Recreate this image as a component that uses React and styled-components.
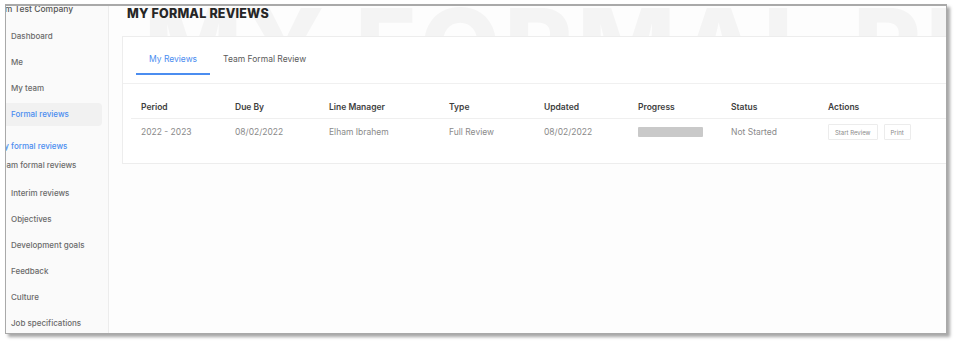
import styled, { createGlobalStyle } from "styled-components";

const Global = createGlobalStyle`
    html, body {
        margin: 0;
        padding: 0;
        background: #ffffff;
        font-family: "Inter", "Open Sans", sans-serif;
    }
`;

const Page = styled.div`
    width: 961px;
    height: 348px;
    padding: 4px 0 0 5px;
    box-sizing: border-box;
`;

const Frame = styled.div`
    width: 942px;
    height: 330px;
    box-sizing: border-box;
    border: 1px solid #a9a9a9;
    border-top-width: 2px;
    box-shadow: 3px 3px 3px rgba(0, 0, 0, 0.35);
    overflow: hidden;
    display: flex;
    background: #fdfdfd;
`;

const Sidebar = styled.aside`
    width: 102px;
    flex-shrink: 0;
    background: #fafafa;
    border-right: 1px solid #ececec;
    display: flex;
    flex-direction: column;
`;

const Company = styled.div`
    margin: -10px 0 0 -16px;
    height: 26px;
    line-height: 26px;
    font-size: 8.5px;
    font-weight: 500;
    color: #555;
    white-space: nowrap;
`;

const NavItem = styled.div`
    height: 23px;
    line-height: 23px;
    margin: 3px 6px 0 0;
    padding-left: ${(p) => (p.$sub ? "0" : "5px")};
    margin-left: ${(p) => (p.$sub ? "-9px" : "0")};
    border-radius: 0 4px 4px 0;
    font-size: 8px;
    font-weight: 500;
    white-space: nowrap;
    color: ${(p) => (p.$blue ? "#4b8df0" : "#6a6a6a")};
    background: ${(p) => (p.$active ? "#f1f1f1" : "transparent")};
`;

const SubGroup = styled.div`
    display: flex;
    flex-direction: column;
    margin: 11px 0 4px;
    & > div {
        height: 19px;
        line-height: 19px;
        margin-top: 0;
    }
`;

const Main = styled.main`
    flex: 1;
    position: relative;
    padding: 0 0 0 13px;
    overflow: hidden;
`;

const Watermark = styled.div`
    position: absolute;
    left: 35px;
    top: -12px;
    font-size: 104px;
    font-weight: 800;
    letter-spacing: 4px;
    color: #f4f4f4;
    white-space: nowrap;
    line-height: 1;
    pointer-events: none;
`;

const Title = styled.h1`
    position: relative;
    margin: 0 0 0 5px;
    height: 30px;
    line-height: 16px;
    font-size: 12.5px;
    font-weight: 800;
    color: #262626;
    letter-spacing: 0.2px;
`;

const Card = styled.section`
    position: relative;
    background: #ffffff;
    border: 1px solid #ededed;
    border-right: none;
    height: 128px;
    box-sizing: border-box;
`;

const Tabs = styled.div`
    display: flex;
    height: 46px;
    padding-left: 13px;
    border-bottom: 1px solid #f0f0f0;
`;

const Tab = styled.div`
    display: flex;
    align-items: center;
    height: 38px;
    padding: 8px 13px 0;
    box-sizing: border-box;
    font-size: 8.5px;
    color: ${(p) => (p.$active ? "#4b8df0" : "#5a5a5a")};
    border-bottom: 2px solid ${(p) => (p.$active ? "#4b8df0" : "transparent")};
`;

const Table = styled.div`
    margin: 12px 0 0 8px;
`;

const Row = styled.div`
    display: grid;
    grid-template-columns: 94px 94px 120px 95px 94px 93px 97px 1fr;
    align-items: center;
    height: ${(p) => (p.$head ? "22px" : "26px")};
    border-bottom: ${(p) => (p.$head ? "1px solid #efefef" : "none")};
`;

const Cell = styled.div`
    padding-left: 10px;
    font-size: 8.5px;
    font-weight: ${(p) => (p.$head ? 600 : 400)};
    color: ${(p) => (p.$head ? "#3e3e3e" : "#8a8a8a")};
    white-space: nowrap;
    display: flex;
    align-items: center;
    gap: 6px;
`;

const Bar = styled.div`
    width: 65px;
    height: 10px;
    border-radius: 1px;
    background: #c9c9c9;
`;

const Button = styled.button`
    height: 16px;
    padding: 0 6px;
    font-family: inherit;
    font-size: 6px;
    color: #8a8a8a;
    background: #ffffff;
    border: 1px solid #ececec;
    border-radius: 1px;
`;

const nav = ["Dashboard", "Me", "My team"];
const navAfter = ["Interim reviews", "Objectives", "Development goals", "Feedback", "Culture", "Job specifications"];
const heads = ["Period", "Due By", "Line Manager", "Type", "Updated", "Progress", "Status", "Actions"];

export default function App() {
    return (
        <>
            <Global />
            <Page>
                <Frame>
                    <Sidebar>
                        <Company>Team Test Company</Company>
                        {nav.map((n) => (
                            <NavItem key={n}>{n}</NavItem>
                        ))}
                        <NavItem $active $blue>Formal reviews</NavItem>
                        <SubGroup>
                            <NavItem $sub $blue>My formal reviews</NavItem>
                            <NavItem $sub>Team formal reviews</NavItem>
                        </SubGroup>
                        {navAfter.map((n) => (
                            <NavItem key={n}>{n}</NavItem>
                        ))}
                    </Sidebar>
                    <Main>
                        <Watermark>MY FORMAL REVIEWS</Watermark>
                        <Title>MY FORMAL REVIEWS</Title>
                        <Card>
                            <Tabs>
                                <Tab $active>My Reviews</Tab>
                                <Tab>Team Formal Review</Tab>
                            </Tabs>
                            <Table>
                                <Row $head>
                                    {heads.map((h) => (
                                        <Cell $head key={h}>{h}</Cell>
                                    ))}
                                </Row>
                                <Row>
                                    <Cell>2022 - 2023</Cell>
                                    <Cell>08/02/2022</Cell>
                                    <Cell>Elham Ibrahem</Cell>
                                    <Cell>Full Review</Cell>
                                    <Cell>08/02/2022</Cell>
                                    <Cell><Bar /></Cell>
                                    <Cell>Not Started</Cell>
                                    <Cell>
                                        <Button>Start Review</Button>
                                        <Button>Print</Button>
                                    </Cell>
                                </Row>
                            </Table>
                        </Card>
                    </Main>
                </Frame>
            </Page>
        </>
    );
}
